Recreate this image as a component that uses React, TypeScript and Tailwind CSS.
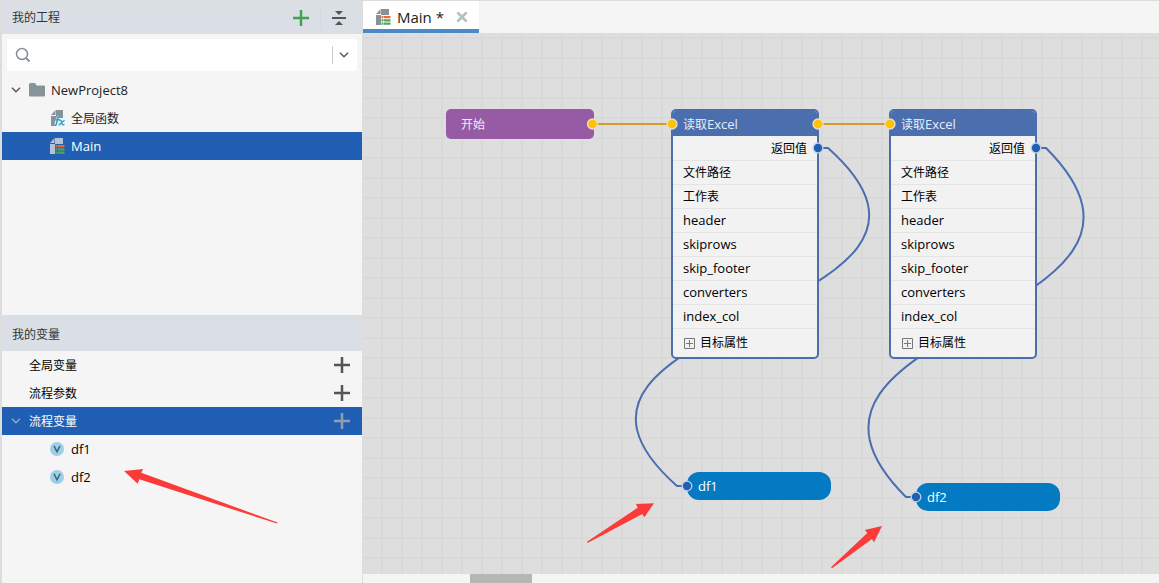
import { useState } from 'react';

const fields = ['文件路径', '工作表', 'header', 'skiprows', 'skip_footer', 'converters', 'index_col'];

const gridStyle =
  'bg-[#dedede] bg-[linear-gradient(to_right,#d9d9d9_2px,transparent_2px),linear-gradient(to_bottom,#d9d9d9_2px,transparent_2px)] bg-[size:20px_20px] bg-[position:18px_4px]';

function SheetIcon({ light = false }: { light?: boolean }) {
  const body = light ? '#b4c1d3' : '#87939a';
  return (
    <svg width="15" height="16" viewBox="0 0 15 16" aria-hidden="true" className="shrink-0">
      <path d="M0 5 4.500 0v5z" fill={body} />
      <path d="M5 0h8v6H5v10H0V6h5z" fill={body} />
      <path d="M5.500 7h2v2.300h-2zM8 7h6.500v2.300H8z" fill="#ea6a35" />
      <path d="M5.500 10.200h2v2.300h-2zM8 10.200h6.500v2.300H8zM5.500 13.400h2v2.300h-2zM8 13.400h6.500v2.300H8z" fill="#55a35e" />
    </svg>
  );
}

function FunctionIcon() {
  return (
    <svg width="15" height="16" viewBox="0 0 15 16" aria-hidden="true" className="shrink-0">
      <path d="M1 5 5.500 0v5z" fill="#87939a" />
      <path d="M6 0h7v8H9.500l-1-2.500L6 8 4 16H1V6h5z" fill="#87939a" />
      <path d="M10.500 6.800c-2-.8-2.700.4-3.100 2.800l-.9 4c-.3 1.600-1.200 2.200-2.500 1.600M5.300 9.700h4.500" fill="none" stroke="#3ba3cf" strokeWidth="1.700" />
      <path d="M9 10.300c2-.6 2.200.4 2.600 2.200.4 2 .9 2.600 2.900 2M14.500 10.300 8.700 15.200" fill="none" stroke="#3ba3cf" strokeWidth="1.500" />
    </svg>
  );
}

function Plus({ color }: { color: string }) {
  return (
    <svg width="16" height="16" viewBox="0 0 16 16" aria-hidden="true">
      <path d="M8 0v16M0 8h16" stroke={color} strokeWidth="2.500" />
    </svg>
  );
}

function Chevron({ color = '#555' }: { color?: string }) {
  return (
    <svg width="10" height="6" viewBox="0 0 10 6" aria-hidden="true" className="shrink-0">
      <path d="m1 .8 4 4 4-4" fill="none" stroke={color} strokeWidth="1.400" />
    </svg>
  );
}

function ProjectPanel() {
  return (
    <section className="min-h-0 overflow-hidden">
      <header className="flex h-[33px] items-center bg-[#dadfe6] pl-[10px] pr-4 text-[#333]">
        <h2 className="flex-1">我的工程</h2>
        <button aria-label="新建" className="mr-[11px]"><Plus color="#44a052" /></button>
        <span className="h-6 w-px bg-[#d5dae1]" />
        <button aria-label="全部折叠" className="ml-[11px]">
          <svg width="14" height="14" viewBox="0 0 14 14" aria-hidden="true">
            <path d="M3 0h8L7 4zM0 6h14v2H0zM3 14h8l-4-4z" fill="#555" />
          </svg>
        </button>
      </header>
      <div className="m-[5px] flex h-8 items-center rounded-[3px] bg-white px-2">
        <label htmlFor="search" className="shrink-0" aria-label="搜索">
          <svg width="16" height="16" viewBox="0 0 16 16" aria-hidden="true">
            <circle cx="7" cy="7" r="5.500" fill="none" stroke="#85909a" strokeWidth="1.500" />
            <path d="m11 11 3.500 3.500" stroke="#85909a" strokeWidth="2" />
          </svg>
        </label>
        <input id="search" className="min-w-0 flex-1 bg-transparent px-2 outline-none" />
        <span className="mr-1.5 h-[18px] w-px bg-[#ccc]" />
        <button aria-label="搜索选项"><Chevron /></button>
      </div>
      <ul>
        <li>
          <button className="flex h-7 w-full items-center pl-[9px] text-[13px] text-[#222]">
            <Chevron />
            <svg width="16" height="14" viewBox="0 0 16 14" aria-hidden="true" className="ml-2 mr-1.5">
              <path d="M0 1.500Q0 0 1.500 0H6l1.500 2.500H15q1 0 1 1V12.500q0 1-1 1H1q-1 0-1-1z" fill="#87939a" />
            </svg>
            <span className="pt-0.5">NewProject8</span>
          </button>
        </li>
        <li>
          <button className="flex h-7 w-full items-center gap-1.5 pl-12 text-[#222]"><FunctionIcon /><span className="pt-0.5">全局函数</span></button>
        </li>
        <li>
          <button className="flex h-7 w-full items-center gap-1.5 bg-[#205fb3] pl-12 text-[13px] text-white"><SheetIcon light /><span className="pt-0.5">Main</span></button>
        </li>
      </ul>
    </section>
  );
}

function VariableGroup({ name, open = false }: { name: string; open?: boolean }) {
  return (
    <div className={open ? 'flex h-7 items-center bg-[#205fb3] pr-3 text-white' : 'flex h-7 items-center pr-3 text-black'}>
      <button className="flex flex-1 items-center pl-[9px]">
        <span className="w-[18px]">{open && <Chevron color="#9aa7b8" />}</span>
        <span className="pt-0.5">{name}</span>
      </button>
      <button aria-label={'添加' + name}><Plus color={open ? '#959da8' : '#555'} /></button>
    </div>
  );
}

function VariablePanel() {
  return (
    <section className="min-h-0 overflow-hidden border-t border-[#ddd]">
      <header className="flex h-[35px] items-center bg-[#dadfe6] pl-[10px] pt-0.5 text-[#333]"><h2>我的变量</h2></header>
      <VariableGroup name="全局变量" />
      <VariableGroup name="流程参数" />
      <VariableGroup name="流程变量" open />
      {['df1', 'df2'].map((name) => (
        <button key={name} className="flex h-7 w-full items-center gap-[7px] pl-12 text-[13px] text-black">
          <svg width="14" height="14" viewBox="0 0 14 14" aria-hidden="true">
            <circle cx="7" cy="7" r="7" fill="#9bd0e8" />
            <path d="m4 3.800 3 6L10 3.800" fill="none" stroke="#4d6675" strokeWidth="1.600" />
          </svg>
          <span className="pt-0.5">{name}</span>
        </button>
      ))}
    </section>
  );
}

function ExcelNode({ place }: { place: string }) {
  const [expanded, setExpanded] = useState(false);
  return (
    <article className={'absolute w-[148px] overflow-hidden rounded-[5px] border-2 border-[#4b6eaf] bg-[#f2f2f2] text-black ' + place}>
      <h3 className="flex h-[25px] items-center bg-[#4b6eaf] pl-2.5 pt-0.5 text-[#e8edf5]">读取<span className="text-[13px]">Excel</span></h3>
      <p className="flex h-[25px] items-center justify-end border-b border-[#e4e4e4] pr-2.5 pt-0.5">返回值</p>
      {fields.map((f, i) => (
        <p key={f} className={i > 1 ? 'flex h-6 items-center border-b border-[#e4e4e4] pl-2.5 text-[13px]' : 'flex h-6 items-center border-b border-[#e4e4e4] pl-2.5'}>
          {f}
        </p>
      ))}
      <button className="flex h-7 w-full items-center gap-[5px] pl-[11px]" aria-expanded={expanded} onClick={() => setExpanded(!expanded)}>
        <svg width="11" height="11" viewBox="0 0 11 11" aria-hidden="true">
          <path d={expanded ? 'M.5.5h10v10H.5zM2 5.500h7' : 'M.5.5h10v10H.5zM2 5.500h7M5.500 2v7'} fill="none" stroke="#777" />
        </svg>
        目标属性
      </button>
    </article>
  );
}

const flowPorts = [[229.5, 91], [309, 91], [455, 91], [527, 91]];
const dataPorts = [[455, 115], [673, 115], [324, 453], [553, 464]];

function Canvas() {
  return (
    <div className={'relative min-h-0 flex-1 overflow-hidden ' + gridStyle}>
      <svg className="absolute inset-0 h-full w-full" aria-hidden="true">
        <g fill="none" strokeWidth="2">
          <path d="M229 91H309M455 91H527" stroke="#d79a2f" />
          <path d="M455 115H465C653 282 126 286 314 453H324" stroke="#4b6eaf" />
          <path d="M673 115H683C855 287 371 292 543 464H553" stroke="#4b6eaf" />
        </g>
      </svg>
      <div className="absolute left-[83px] top-[76px] flex h-[30px] w-[148px] items-center rounded-[5px] bg-[#975ba5] pl-[15px] pt-0.5 text-[#f3eaf5]">开始</div>
      <ExcelNode place="left-[308px] top-[76px]" />
      <ExcelNode place="left-[526px] top-[76px]" />
      <div className="absolute left-[324px] top-[439px] flex h-7 w-36 items-center rounded-[12px] bg-[#037ac1] pl-[11px] pt-0.5 text-[13px] text-white">df1</div>
      <div className="absolute left-[553px] top-[450px] flex h-7 w-36 items-center rounded-[12px] bg-[#037ac1] pl-[11px] pt-0.5 text-[13px] text-white">df2</div>
      <svg className="pointer-events-none absolute inset-0 h-full w-full" aria-hidden="true">
        {flowPorts.map(([x, y]) => <circle key={x} cx={x} cy={y} r="5" fill="#ffc400" stroke="#e6dfd0" strokeWidth="1.300" />)}
        {dataPorts.map(([x, y]) => <circle key={x} cx={x} cy={y} r="4.800" fill="#205fb3" stroke="#c3cfe4" strokeWidth="1.300" />)}
      </svg>
    </div>
  );
}

export default function App() {
  return (
    <div className="relative flex h-screen overflow-hidden border-t border-[#ddd] bg-[#f5f5f5] font-['Open_Sans','Noto_Sans_CJK_SC',sans-serif] text-xs">
      <aside className="grid w-[363px] shrink-0 grid-rows-[314fr_268fr] border-l-2 border-r border-[#ddd]">
        <ProjectPanel />
        <VariablePanel />
      </aside>
      <main className="flex min-w-0 flex-1 flex-col">
        <nav className="flex h-8 shrink-0">
          <div className="flex w-[116px] items-center border-b-4 border-[#4a8ac8] bg-white pl-[13px] pt-1">
            <button className="flex items-center gap-1.5 whitespace-pre text-[15px] text-[#222]"><SheetIcon />{'Main *'}</button>
            <button aria-label="关闭" className="ml-auto mr-3">
              <svg width="10" height="10" viewBox="0 0 10 10" aria-hidden="true">
                <path d="m0 0 10 10M10 0 0 10" stroke="#b3c1c9" strokeWidth="2.800" />
              </svg>
            </button>
          </div>
        </nav>
        <Canvas />
        <div className="h-[9px] shrink-0 pl-[107px]"><div className="h-full w-[62px] bg-[#b6b6b6]" /></div>
      </main>
      <svg className="pointer-events-none absolute inset-0 h-full w-full" aria-hidden="true">
        <g fill="#fc3a38" transform="translate(0 -1)">
          <path d="m124 471 19-2-1.700 3.700L277.500 522.600l-.5 1L139.300 479.300l-1.600 4.400z" />
          <path d="m654 503.300-18 .7 1.700 3.700L587 541.800l.5 1.200L642.300 514l2 3.300z" />
          <path d="m882 526-17.300 4 2.600 3L831 567.300l1 .9L872 539l2 3.300z" />
        </g>
      </svg>
    </div>
  );
}
